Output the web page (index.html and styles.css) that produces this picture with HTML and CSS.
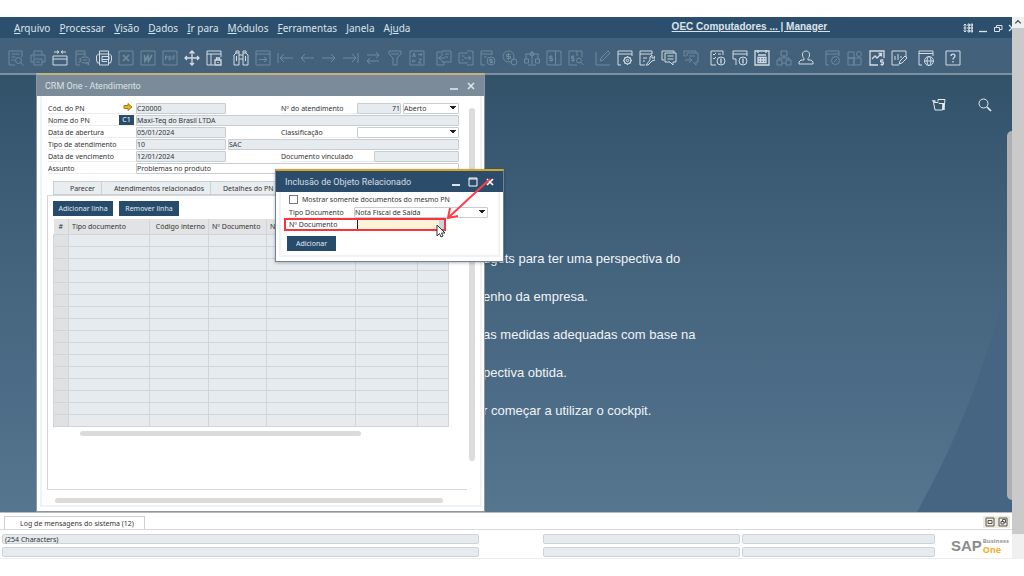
FILE: index.html
```html
<!DOCTYPE html>
<html lang="pt-BR">
<head>
<meta charset="utf-8">
<title>OEC Computadores | CRM One - Atendimento</title>
<link rel="stylesheet" href="styles.css">
</head>
<body>
<div class="app">
  <div class="client">
    <header class="menubar">
      <nav class="menus">
        <a href="#"><u>A</u>rquivo</a>
        <a href="#"><u>P</u>rocessar</a>
        <a href="#"><u>V</u>isão</a>
        <a href="#"><u>D</u>ados</a>
        <a href="#"><u>I</u>r para</a>
        <a href="#"><u>M</u>ódulos</a>
        <a href="#"><u>F</u>erramentas</a>
        <a href="#"><u>J</u>anela</a>
        <a href="#">Aj<u>u</u>da</a>
      </nav>
      <a class="company" href="#">OEC Computadores ... | Manager&nbsp;</a>
      <div class="sys">
        <button aria-label="Layout"><svg viewBox="0 0 10 10"><path d="M2 1v8M.5 2.500 2 1l1.500 1.500M.5 7.500 2 9l1.500-1.500M.5 5h3M5 1h1.500v2H5zM8 1h1.500v2H8zM5 4h1.500v2H5zM8 4h1.500v2H8zM5 7h1.500v2H5zM8 7h1.500v2H8z"/></svg></button>
        <button aria-label="Minimizar"><svg viewBox="0 0 10 10"><path class="bold" d="M1 8.500h8"/></svg></button>
        <button aria-label="Restaurar"><svg viewBox="0 0 10 10"><path d="M1.500 4.500h5v4h-5zM3.500 4.500v-2h5.500v4H6.500"/></svg></button>
        <button aria-label="Fechar" class="cut"><svg viewBox="0 0 10 10"><path class="bold" d="M1 2l6 6M7 2 1 8"/></svg></button>
      </div>
    </header>

    <div class="toolbar">
      <div class="group">
        <button class="off" aria-label="Visualizar"><svg viewBox="0 0 16 16"><path d="M7 15H1V1h13v6M3.500 4h8M3.500 7h4M3.500 10h3"/><circle cx="10.500" cy="10.500" r="3"/><path d="m12.500 12.500 3 3"/></svg></button>
        <button class="off" aria-label="Imprimir"><svg viewBox="0 0 16 16"><path d="M4 5V1h8v4M4 12H1V5h14v7h-3M4 9h8v6H4zM3 7h2M6 12h4"/></svg></button>
        <button aria-label="Enviar e-mail"><svg viewBox="0 0 16 16"><path d="M1 6h14v9H1zM1 9h14M2 2h5M9 2h5M5 .5 7 2 5 3.500M11 .5 9 2l2 1.500"/></svg></button>
        <button class="off" aria-label="SMS"><svg viewBox="0 0 16 16"><path d="M6 15H2V1h9v5M2 4h9M5 9h2M4 12h2"/><ellipse cx="11" cy="10" rx="4.500" ry="3"/><path d="m12 13 3 2-1-3M9 10h4"/></svg></button>
        <button aria-label="Fax"><svg viewBox="0 0 16 16"><path d="M3.500 4V1h9v3M3 13H1.500L.5 10V6l2-2h11l2 2v4l-1 3H13M3.500 4v11h9V4M6 6.500h7M6 9.500h7v-3M6 6.500v5h5"/></svg></button>
        <button class="off" aria-label="Excel"><svg viewBox="0 0 16 16"><path d="M1 1h14v14H1z"/><path class="heavy" d="m5 5 6 6M11 5l-6 6"/></svg></button>
        <button class="off" aria-label="Word"><svg viewBox="0 0 16 16"><path d="M1 1h14v14H1z"/><path class="heavy" d="m4.500 5 .5 6 3-5 .5 5 3.500-6"/></svg></button>
        <button class="off" aria-label="PDF"><svg viewBox="0 0 16 16"><path d="M1 1h14v14H1zM3.500 10V6h1.500v2H3.500M7 10V6h1l1 2-1 2zM11 10V6h2M11 8h1.500"/></svg></button>
        <button aria-label="Iniciar aplicação"><svg viewBox="0 0 16 16"><path class="bold" d="M8 1v14M1 8h14M5.500 3.500 8 1l2.500 2.500M6 13l2 2 2-2M3 6 1 8l2 2M13 6l2 2-2 2"/></svg></button>
        <button aria-label="Bloquear tela"><svg viewBox="0 0 16 16"><path d="M8 15H1V1h14v6M1 4h14M5 4v11"/><path class="bold" d="M9 10h6v5H9zM10.500 10V8h3v2M12 12v1"/></svg></button>
      </div>
      <div class="group">
        <button aria-label="Procurar"><svg viewBox="0 0 16 16"><path d="M1 15V5l2-2h3v12zM10 15V3h3l2 2v10zM3 3V1h3v2M10 3V1h3v2M6 5h4M6 9h4M3.500 6v5M12.500 6v5"/></svg></button>
        <button class="off" aria-label="Adicionar"><svg viewBox="0 0 16 16"><path d="M1 1h14v14H1zM1 4h14M4 9.500h8M9 7l3 2.500L9 12"/></svg></button>
        <button class="off" aria-label="Primeiro"><svg viewBox="0 0 16 16"><path d="M1 3v10M3 8h13M7 4 3 8l4 4"/></svg></button>
        <button class="off" aria-label="Anterior"><svg viewBox="0 0 16 16"><path d="M2 8h13M6 4 2 8l4 4"/></svg></button>
        <button class="off" aria-label="Próximo"><svg viewBox="0 0 16 16"><path d="M1 8h13M10 4l4 4-4 4"/></svg></button>
        <button class="off" aria-label="Último"><svg viewBox="0 0 16 16"><path d="M15 3v10M0 8h13M9 4l4 4-4 4"/></svg></button>
        <button class="off" aria-label="Atualizar"><svg viewBox="0 0 16 16"><path d="M2 5h12M11 2l3 3-3 3M14 11H2M5 8l-3 3 3 3"/></svg></button>
        <button class="off" aria-label="Filtrar"><svg viewBox="0 0 16 16"><path d="M2 1h12v3l-4 4v7H6V8L2 4zM4 4h8"/></svg></button>
        <button class="off" aria-label="Ordenar"><svg viewBox="0 0 16 16"><path d="M1 1h14v14H1zM3.500 7 5 3l1.500 4M4 6h2M9 4.500h4M11.500 3 13 4.500 11.500 6M9.500 9h3l-3 4h3M7 11H3M4.500 9.500 3 11l1.500 1.500"/></svg></button>
      </div>
      <div class="group">
        <button class="off" aria-label="Documento base"><svg viewBox="0 0 16 16"><path d="M5 2H1v13h7v-3M6 6V1h9v11H6v-2M9 4h4M9 7h3M2.500 8H9M5 6 2.500 8 5 10"/></svg></button>
        <button class="off" aria-label="Documento destino"><svg viewBox="0 0 16 16"><path d="M9 4V3H1v10h8v-1M9 1h6v14H9M3.500 6h3M3.500 10h2M6 8h7M10.500 6 13 8l-2.500 2"/></svg></button>
        <button class="off" aria-label="Lucro bruto"><svg viewBox="0 0 16 16"><path d="M5 15H1V1h11v4M1 4h11M4 7h3"/><circle cx="11" cy="11" r="4"/><path d="M12.500 9.500h-3v1.500h3v1.500h-3M11 8.500v5"/></svg></button>
        <button class="off" aria-label="Meios de pagamento"><svg viewBox="0 0 16 16"><circle cx="6.500" cy="6.500" r="5.500"/><path d="M8.500 4.500h-4v2h4v2h-4M6.500 3v7"/><circle cx="12" cy="12" r="3"/></svg></button>
        <button class="off" aria-label="Volume e peso"><svg viewBox="0 0 16 16"><path d="M8 1v13M4 15h8M1 4h14M2 4v5M14 4v5M.5 9h4v4h-4zM11.500 9h4v4h-4z"/><circle cx="8" cy="4" r="2"/></svg></button>
        <button class="off" aria-label="Diário"><svg viewBox="0 0 16 16"><path d="M1 1h14v14H1zM9.500 1v14M6.500 6.500h-3v2h3v2h-3M5 5v7"/></svg></button>
        <button class="off" aria-label="Pesquisar diário"><svg viewBox="0 0 16 16"><path d="M9 15H1V1h13v6M9 1v5M6 6.500H3.500v2H6v2H3.500M5 5v7"/><circle cx="11" cy="10.500" r="2.500"/><path d="m13 12.500 2.500 2.500"/></svg></button>
      </div>
      <div class="group">
        <button class="off" aria-label="Editar"><svg viewBox="0 0 16 16"><path d="M1 2v13h14M5 11l1-3 7-7 2 2-7 7z"/></svg></button>
        <button aria-label="Configurar formulário"><svg viewBox="0 0 16 16"><path d="M4 15H1V1h14v5M1 4h14"/><circle cx="10.500" cy="10.500" r="3.500"/><circle cx="10.500" cy="10.500" r="1.200"/><path class="bold" d="M10.500 6v1.500M10.500 13.500V15M6 10.500h1.500M13.500 10.500H15M7.500 7.500l1 1M12.500 12.500l1 1M13.500 7.500l-1 1M8.500 12.500l-1 1"/></svg></button>
        <button aria-label="Campos definidos"><svg viewBox="0 0 16 16"><path d="M6 15H1V1h12v3M1 4h12M4 8h4M4 11h2"/><path d="m7 15 4-5V7l2-2v3h2l1-2v4l-3 1-4 4z"/></svg></button>
        <button aria-label="Mensagens"><svg viewBox="0 0 16 16"><path d="M3 10H1V1h12v2"/><path d="M4 3h11v9h-3v3l-3-3H4zM6.500 6h6M6.500 9h6"/></svg></button>
        <button class="off" aria-label="Encaminhar"><svg viewBox="0 0 16 16"><path d="M3 6H1V1h12v2M4 6V3h11v9h-2v3l-3-3M6 6h6M2 10h7M6 8l3 2-3 3"/></svg></button>
      </div>
      <div class="group">
        <button aria-label="Alertas de atividade"><svg viewBox="0 0 16 16"><path d="M6 15H1V1h12v4M3 4l1 1 2-2M8 4h3M3 8l1 1 2-2"/><circle cx="11" cy="11" r="4"/><path class="bold" d="M11 8.500v5"/></svg></button>
        <button aria-label="Alertas"><svg viewBox="0 0 16 16"><path d="M4 15V9H1V1h14v5M1 4h14"/><circle cx="11" cy="11" r="4"/><path class="bold" d="M11 8.500v5"/></svg></button>
        <button aria-label="Calendário"><svg viewBox="0 0 16 16"><path class="bold" d="M1 1h14v14H1zM4 0v3M12 0v3M4 5h8M4 7.500h8v5H4zM6.500 7.500v5M9.500 7.500v5M4 10h8"/></svg></button>
        <button class="off" aria-label="Organograma"><svg viewBox="0 0 16 16"><path d="M5 1h6v5H5zM1 10h5v5H1zM10 10h5v5h-5zM3 10V8h10v2M8 6v2M6 13h4"/></svg></button>
        <button aria-label="Usuário"><svg viewBox="0 0 16 16"><path d="M6 8.500C3.500 6 4 1 8 1s4.500 5 2 7.500V10h3l2 2v2H1v-2l2-2h3z"/></svg></button>
      </div>
      <div class="group">
        <button class="off" aria-label="Painel"><svg viewBox="0 0 16 16"><path d="M4 15H1V1h13v5M1 4h13"/><circle cx="10.500" cy="10.500" r="4"/><path d="m9 12 3-3"/></svg></button>
        <button class="off" aria-label="Widgets"><svg viewBox="0 0 16 16"><path d="M1 2h6v6H1zM1 8h6v7H1zM7 8h7v7H7z"/><circle cx="12" cy="4" r="2.500"/></svg></button>
        <button aria-label="Vendas"><svg viewBox="0 0 16 16"><path class="bold" d="M9 15H1V1h14v7M3 9l3-3 2 2 4-4M9.500 3.500h3v3"/><path d="M14.500 10h-3v2h3v2.500h-3M13 9v7"/></svg></button>
        <button aria-label="Relatório"><svg viewBox="0 0 16 16"><path d="M8 15H1V1h14v6M4 6v4M7 4v6M10 6v2"/><path d="m8 14 1-3 5-5 2 2-5 5z"/></svg></button>
      </div>
      <div class="group">
        <button aria-label="Web"><svg viewBox="0 0 16 16"><path d="M4 15H1V1h14v5M1 3.500h14"/><circle cx="11" cy="11" r="4.500"/><ellipse cx="11" cy="11" rx="2" ry="4.500"/><path d="M6.500 11h9"/></svg></button>
      </div>
      <div class="group">
        <button aria-label="Ajuda"><svg viewBox="0 0 16 16"><path d="M1 1h14v14H1z"/><path class="bold" d="M6 6c0-2.500 4-2.500 4 0 0 1.500-2 1.500-2 3.500M8 11v1.500"/></svg></button>
      </div>
    </div>

    <main class="desktop">
      <svg class="curve" viewBox="0 0 95 251" preserveAspectRatio="none"><path d="M95 0C72 98 45 170 0 251h95z"/></svg>
      <div class="cockpit-tools">
        <button aria-label="Abrir cockpit"><svg viewBox="0 0 14 14"><path d="M6 3.500V1.500h7l-1 9M3 12 1.500 4.500H6l1 1h4L10.500 12zM.5 2.500 3 4.500"/><path class="heavy" d="M.5 3h3M11 5l1 7"/></svg></button>
        <button aria-label="Pesquisar"><svg viewBox="0 0 14 14"><circle cx="5.500" cy="5.500" r="4.500"/><path class="heavy" d="m9 9 4 4"/></svg></button>
      </div>
      <div class="cockpit-text">
        <p>dgets para ter uma perspectiva do</p>
        <p>enho da empresa.</p>
        <p>as medidas adequadas com base na</p>
        <p>pectiva obtida.</p>
        <p>r começar a utilizar o cockpit.</p>
      </div>
      <div class="desk-scroll"></div>

      <section class="window crm">
        <div class="title"><h1>CRM One - Atendimento</h1>
          <button aria-label="Minimizar"><svg viewBox="0 0 10 10"><path class="heavy" d="M1 8h8"/></svg></button>
          <button aria-label="Fechar"><svg viewBox="0 0 10 10"><path class="heavy" d="m2 2 6 6M8 2 2 8"/></svg></button>
        </div>
        <div class="frame">
          <div class="content">
            <div class="form">
              <div class="row">
                <label for="cod">Cód. do PN</label>
                <svg class="link" viewBox="0 0 10 8"><path d="M1 2.500h4V.5L9 4 5 7.500v-2H1z"/></svg>
                <input id="cod" class="w-a" value="C20000">
                <label class="second" for="num">Nº do atendimento</label>
                <input id="num" class="w-num" value="71">
                <select class="w-rest" aria-label="Status"><option>Aberto</option></select>
              </div>
              <div class="row">
                <label for="nome">Nome do PN</label><span class="badge">C1</span>
                <input id="nome" class="w-rest" value="Maxi-Teq do Brasil LTDA">
              </div>
              <div class="row">
                <label for="abertura">Data de abertura</label>
                <input id="abertura" class="w-a" value="05/01/2024">
                <label class="second" for="classe">Classificação</label>
                <select id="classe" class="w-rest"><option></option></select>
              </div>
              <div class="row">
                <label for="tipo">Tipo de atendimento</label>
                <input id="tipo" class="w-a" value="10">
                <input class="w-rest near" aria-label="Descrição do tipo" value="SAC">
              </div>
              <div class="row">
                <label for="venc">Data de vencimento</label>
                <input id="venc" class="w-a" value="12/01/2024">
                <label class="second wide" for="vinc">Documento vinculado</label>
                <input id="vinc" class="w-rest">
              </div>
              <div class="row">
                <label for="assunto">Assunto</label>
                <input id="assunto" class="w-rest plain" value="Problemas no produto">
              </div>
            </div>
            <div class="tabs">
              <button class="t1">Parecer</button><button class="t2">Atendimentos relacionados</button><button class="t3">Detalhes do PN</button>
            </div>
            <div class="panel">
              <div class="actions"><button class="primary">Adicionar linha</button><button class="primary">Remover linha</button></div>
              <table>
                <colgroup><col class="c1"><col class="c2"><col class="c3"><col class="c4"><col class="c5"><col class="c6"><col></colgroup>
                <thead><tr><th>#</th><th>Tipo documento</th><th>Código interno</th><th>Nº Documento</th><th>Nº</th><th></th><th></th></tr></thead>
                <tbody>
                  <tr><td></td><td></td><td></td><td></td><td></td><td></td><td></td></tr>
                  <tr><td></td><td></td><td></td><td></td><td></td><td></td><td></td></tr>
                  <tr><td></td><td></td><td></td><td></td><td></td><td></td><td></td></tr>
                  <tr><td></td><td></td><td></td><td></td><td></td><td></td><td></td></tr>
                  <tr><td></td><td></td><td></td><td></td><td></td><td></td><td></td></tr>
                  <tr><td></td><td></td><td></td><td></td><td></td><td></td><td></td></tr>
                  <tr><td></td><td></td><td></td><td></td><td></td><td></td><td></td></tr>
                  <tr><td></td><td></td><td></td><td></td><td></td><td></td><td></td></tr>
                  <tr><td></td><td></td><td></td><td></td><td></td><td></td><td></td></tr>
                  <tr><td></td><td></td><td></td><td></td><td></td><td></td><td></td></tr>
                  <tr><td></td><td></td><td></td><td></td><td></td><td></td><td></td></tr>
                  <tr><td></td><td></td><td></td><td></td><td></td><td></td><td></td></tr>
                  <tr><td></td><td></td><td></td><td></td><td></td><td></td><td></td></tr>
                  <tr><td></td><td></td><td></td><td></td><td></td><td></td><td></td></tr>
                  <tr><td></td><td></td><td></td><td></td><td></td><td></td><td></td></tr>
                  <tr><td></td><td></td><td></td><td></td><td></td><td></td><td></td></tr>
                </tbody>
              </table>
              <div class="thumb table-thumb"></div>
            </div>
            <div class="thumb window-thumb"></div>
          </div>
          <div class="side"><div class="vthumb"></div></div>
        </div>
      </section>

      <section class="window dialog">
        <div class="title"><h2>Inclusão de Objeto Relacionado</h2>
          <button aria-label="Minimizar"><svg viewBox="0 0 10 10"><path class="heavy" d="M1 8h8"/></svg></button>
          <button aria-label="Maximizar"><svg viewBox="0 0 10 10"><path d="M1 1h8v8H1zM1 2h8"/></svg></button>
          <button aria-label="Fechar"><svg viewBox="0 0 10 10"><path class="heavy" d="m2 2 6 6M8 2 2 8"/></svg></button>
        </div>
        <div class="frame">
          <label class="check"><input type="checkbox">Mostrar somente documentos do mesmo PN</label>
          <div class="row"><label for="tdoc">Tipo Documento</label><select id="tdoc" class="w-rest"><option>Nota Fiscal de Saída</option></select></div>
          <div class="row marked"><label for="ndoc">Nº Documento</label><div class="picker"><input id="ndoc"><i></i></div></div>
          <button class="primary">Adicionar</button>
        </div>
        <svg class="arrow" viewBox="0 0 50 46"><path d="M46 3 5 41M6 32 4 42l10-2"/></svg>
        <svg class="cursor" viewBox="0 0 10 14"><path d="M1 1v11l2.500-2.500L5 13l2-1-1.500-3H9z"/></svg>
      </section>
    </main>

    <footer class="log">
      <div class="log-head">
        <button class="log-tab">Log de mensagens do sistema (12)</button>
        <div class="log-tools">
          <button aria-label="Maximizar log"><svg viewBox="0 0 10 10"><path d="M1 1h8v8H1z"/><path d="M3 3.500h4v3H3z"/></svg></button>
          <button aria-label="Destacar log"><svg viewBox="0 0 10 10"><path d="M1 1h8v8H1zM3 4.500h3v2.500H3zM4.500 4.500v-2h3v3H6"/></svg></button>
        </div>
      </div>
      <div class="status">
        <div class="fields">
          <output class="long">(254 Characters)</output><output class="mid"></output><output></output>
          <output class="long"></output><output class="mid"></output><output></output>
        </div>
        <div class="logo"><b>SAP</b><span>Business<strong>One</strong></span></div>
      </div>
    </footer>
  </div>
  <div class="page-scroll"><svg viewBox="0 0 12 12"><path class="bold" d="m3 7 3-3 3 3"/></svg><div class="page-thumb"></div></div>
</div>
</body>
</html>
```
FILE: styles.css
```css
* { box-sizing: border-box; }
body {
  margin: 0;
  min-height: 100vh;
  padding: 17px 0;
  display: flex;
  background: #fff;
  color: #333;
  font: 7px/11px "Noto Sans", sans-serif;
}
button, input, select { font: inherit; color: inherit; margin: 0; padding: 0; border: 0; background: none; border-radius: 0; }
svg { display: block; fill: none; stroke: currentColor; stroke-width: 1; }
.bold { stroke-width: 1.3; }
.heavy { stroke-width: 1.7; }
p, h1, h2 { margin: 0; font-weight: normal; }

.app { flex: 1; display: flex; min-width: 0; }
.client { flex: 1; min-width: 0; display: flex; flex-direction: column; }

.menubar {
  height: 21px;
  display: flex;
  align-items: center;
  background: #2c4f6d;
  color: #dbe3ea;
  font: 10px/20px "Noto Sans", sans-serif;
}
.menubar a { color: inherit; text-decoration: none; }
.menus { flex: 1; display: flex; gap: 9px; padding-left: 14px; }
.menubar .company { font: bold 10px/18px "Liberation Sans", sans-serif; text-decoration: underline; padding-bottom: 2px; }
.sys { width: 182px; display: flex; justify-content: flex-end; gap: 5px; overflow: hidden; }
.sys button, .sys svg { width: 10px; height: 10px; }
.sys .cut { width: 4px; overflow: hidden; }

.toolbar {
  height: 35px;
  padding: 12px 8px 0;
  display: flex;
  gap: 11px;
  background: #43617b;
  color: #d3dce3;
}
.group { display: flex; gap: 6px; }
.toolbar button, .toolbar svg { width: 16px; height: 16px; }
.toolbar .off { color: #708a9d; }

.desktop {
  flex: 1;
  position: relative;
  border-top: 2px solid #7c90a1;
  background: linear-gradient(#32526a, #3d5d77 28%, #46657f 50%, #4d6c87 75%, #56768e);
}
.curve { position: absolute; right: 0; bottom: 0; width: 95px; height: 251px; fill: #456582; stroke: none; }
.cockpit-tools { display: flex; justify-content: flex-end; gap: 32px; padding: 23px 20px 0; color: #e6ebef; position: relative; }
.cockpit-tools button, .cockpit-tools svg { width: 14px; height: 14px; }
.cockpit-text { padding: 137px 0 0 483px; color: #f1f4f6; font: 13px/20px "Liberation Sans", sans-serif; display: grid; grid-auto-rows: 20px; row-gap: 18px; }
.desk-scroll { position: absolute; right: 0; top: 56px; bottom: 12px; width: 5px; border-radius: 5px 0 0 5px; background: #aeb0b1; }

.window { position: absolute; display: flex; flex-direction: column; background: #fff; border: 1px solid #8c979f; border-top: 2px solid #c3b37b; }
.title { display: flex; align-items: center; color: #fff; font: 9px/20px Roboto, sans-serif; }
.title h1, .title h2 { flex: 1; font-size: inherit; }
.title button, .title svg { width: 10px; height: 10px; }
.frame { flex: 1; display: flex; margin: 0 3px 4px; border: 2px solid #f2f2f2; border-top: 0; }

.crm { left: 36px; top: -2px; width: 449px; bottom: 0; }
.crm .title { height: 21px; padding: 0 8px; gap: 7px; background: #7c8b99; color: #dde2e6; }
.crm .frame { margin-right: 2px; }
.content { flex: 1; min-width: 0; display: flex; flex-direction: column; padding: 7px 0 0 5px; }
.side { flex: none; width: 13px; padding: 12px 0 0 2px; }
.vthumb { width: 6px; height: 353px; border-radius: 3px; background: #dcdcdc; }

.form { display: flex; flex-direction: column; gap: 1px; padding: 0 8px 0 1px; }
.row { display: flex; position: relative; height: 11px; }
.row label { flex: none; width: 88px; border-bottom: 1px solid #ececec; white-space: nowrap; line-height: 12px; }
.row label.second { width: 76px; margin-left: 55px; }
.row label.wide { width: 93px; }
.row input, .row select { min-width: 0; height: 11px; border: 1px solid #c6ccd0; border-radius: 1px; background: #e5ebef; line-height: 9px; }
.row select {
  appearance: none;
  background: #fff;
  background-image: linear-gradient(to bottom left, #222 50%, transparent 50%), linear-gradient(to bottom right, #222 50%, transparent 50%);
  background-size: 3px 4px;
  background-repeat: no-repeat;
  background-position: right 5px top 2px, right 2px top 2px;
}
.row .w-a { flex: none; width: 90px; }
.row .w-num { flex: none; width: 44px; margin-right: 2px; text-align: right; }
.row .w-rest { flex: 1; width: 0; }
.row .near { margin-left: 2px; }
.row .plain { background: #fff; }
.link { position: absolute; left: 75px; top: 0; width: 10px; height: 8px; fill: #f2b21c; stroke: #a37a22; }
.badge { position: absolute; left: 71px; top: 0; width: 15px; height: 10px; background: #264b6b; color: #fff; text-align: center; line-height: 10px; }

.tabs { display: flex; height: 14px; margin: 7px 6px 0; }
.tabs button { height: 14px; border: 1px solid #ccd1d5; border-left: 0; background: #e8edf0; text-align: right; padding-right: 6px; white-space: nowrap; }
.tabs .t1 { width: 49px; border-left: 1px solid #ccd1d5; }
.tabs .t2 { width: 109px; }
.tabs .t3 { width: 80px; padding: 0 0 0 12px; text-align: left; }
.panel { height: 295px; border: 1px solid #d6d6d6; border-right: 0; padding: 5px 18px 0 5px; }
.actions { display: flex; gap: 6px; margin-bottom: 3px; }
.primary { height: 15px; width: 60px; background: #264b6b; color: #e3eaf0; white-space: nowrap; }

table { width: 100%; table-layout: fixed; border-collapse: collapse; }
.c1 { width: 15px; } .c2 { width: 81px; } .c3 { width: 59px; } .c4 { width: 58px; } .c5 { width: 89px; } .c6 { width: 62px; }
th { height: 15px; padding: 0 3px; background: #e2e3e4; border-right: 1px solid #d2d5d7; font-weight: normal; text-align: left; white-space: nowrap; }
th:first-child { text-align: center; }
th:nth-child(3) { text-align: right; }
td { height: 12px; padding: 0; border: 1px solid #cfd5d9; background: #e5ebef; }
td:first-child { background: #e0e1e2; }
.thumb { height: 5px; border-radius: 3px; background: #dbdbdb; }
.table-thumb { width: 281px; margin: 4px 0 0 27px; }
.window-thumb { width: 388px; margin: 8px 0 0 8px; }

.dialog { left: 275px; top: 94px; width: 229px; border-color: #6f8496; border-top-color: #d5a52b; box-shadow: 0 1px 3px #0004; }
.dialog .title { height: 21px; padding: 0 8px 0 9px; gap: 7px; background: #2b4d6b; color: #d5dee6; }
.dialog .title button { color: #fff; }
.dialog .frame { flex-direction: column; align-items: flex-start; padding: 1px 5px 4px 6px; }
.check { display: flex; align-items: center; gap: 4px; height: 12px; padding-left: 2px; white-space: nowrap; }
.check input { appearance: none; width: 9px; height: 9px; border: 1px solid #777; background: #fff; }
.dialog .row { align-self: stretch; margin: 2px 5px 1px 0; height: 11px; }
.dialog .row label { width: 67px; padding-left: 2px; }
.dialog .marked { width: 160px; margin: 0 0 6px -2px; outline: 2px solid #f8343c; outline-offset: -1px; }
.dialog .marked label { padding-left: 4px; width: 72px; }
.picker { flex: 1; min-width: 0; display: flex; background: #fdf3d8; border-left: 1px solid #222; }
.dialog .picker input { flex: 1; width: 0; border: 0; background: none; }
.picker i { width: 6px; background: #cdd5dc; }
.dialog .primary { width: 49px; }
.arrow { position: absolute; left: 168px; top: 5px; width: 50px; height: 46px; color: #ff3f46; stroke-width: 2; }
.cursor { position: absolute; left: 160px; top: 53px; width: 10px; height: 14px; fill: #fff; color: #333; }

.log { background: #fff; }
.log-head { display: flex; justify-content: space-between; height: 18px; border-bottom: 1px solid #d9d9d9; border-top: 1px solid #b5bcc2; padding: 3px 2px 0 4px; }
.log-tab { width: 141px; height: 13px; border: 1px solid #cfcfcf; border-bottom: 0; background: #fff; padding: 0 0 0 5px; }
.log-tools { display: flex; gap: 3px; height: 12px; padding: 1px 2px; background: #efebdf; }
.log-tools button, .log-tools svg { width: 10px; height: 10px; color: #555; }
.status { display: flex; justify-content: space-between; padding: 4px 3px 1px 2px; border-bottom: 1px solid #ececec; }
.fields { flex: 1; display: grid; grid-template-columns: 477px 60px 197px 193px; column-gap: 2px; row-gap: 3px; }
.fields output { height: 10px; border: 1px solid #cdd4d8; border-radius: 2px; background: #e5ebee; padding-left: 2px; line-height: 9px; }
.fields .mid { grid-column: 3; }
.logo { display: flex; align-items: center; gap: 1px; color: #8b8b8b; }
.logo b { font: bold 15px/22px "Liberation Sans", sans-serif; }
.logo span { display: flex; flex-direction: column; font: bold 6px/7px "Noto Sans", sans-serif; color: #999; }
.logo strong { font: bold 9px/9px "Noto Sans", sans-serif; color: #eeb02c; }

.page-scroll { width: 12px; display: flex; flex-direction: column; background: #f0f0f0; color: #444; }
.page-scroll svg { width: 12px; height: 11px; }
.page-thumb { height: 506px; background: #cacaca; }
```
